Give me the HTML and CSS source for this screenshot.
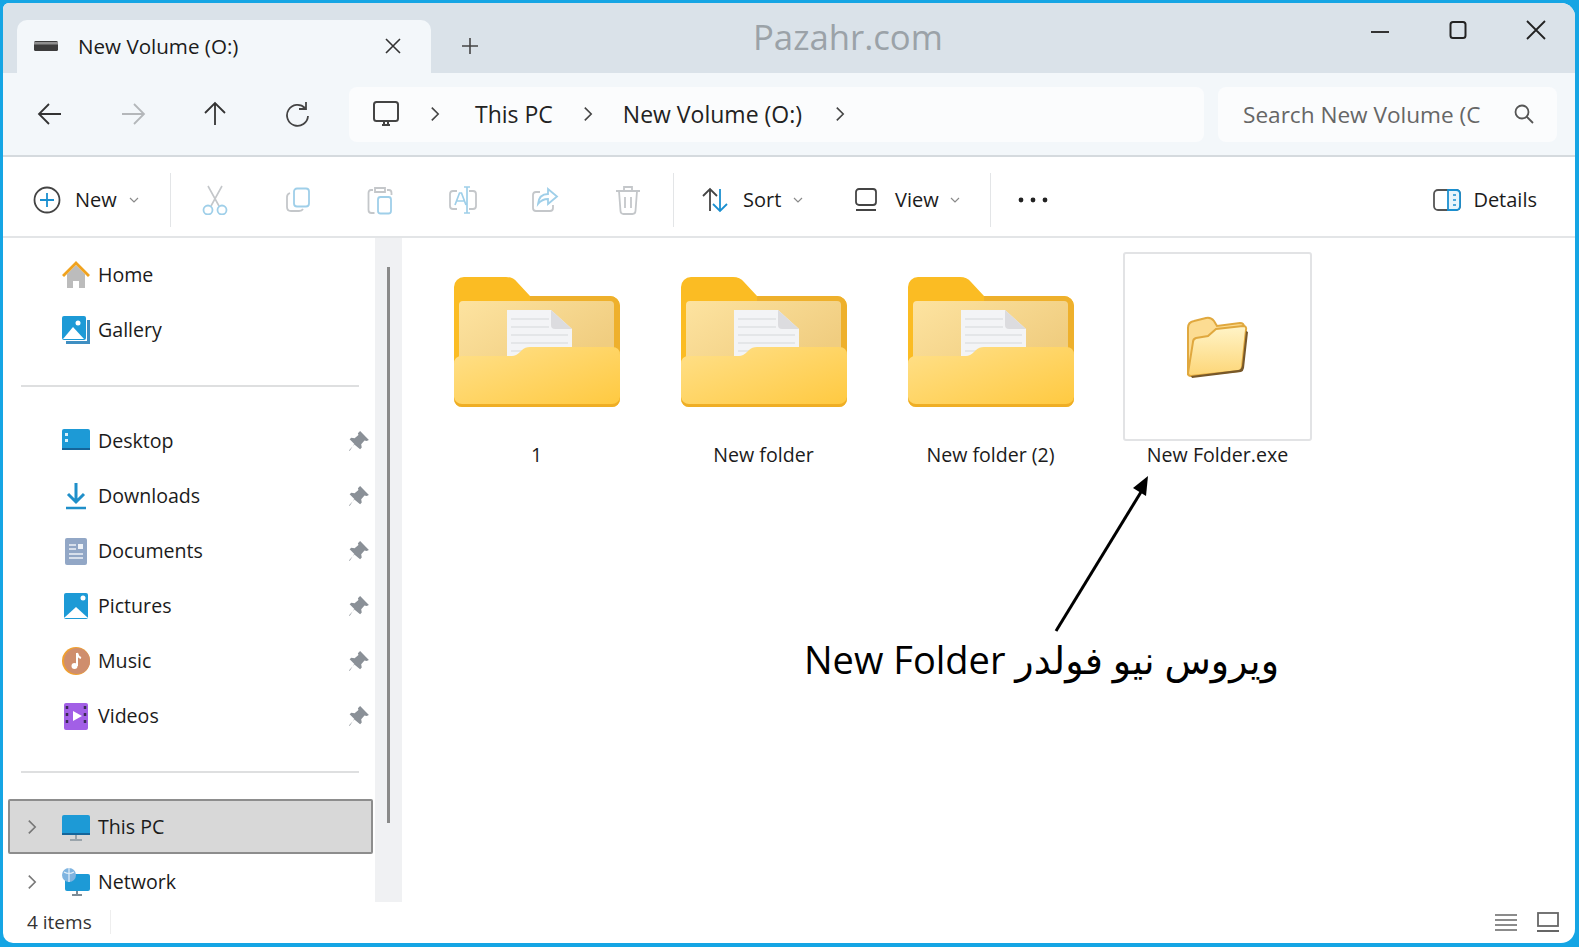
FILE: index.html
```html
<!DOCTYPE html>
<html lang="en">
<head>
    <meta charset="UTF-8">
    <meta name="viewport" content="width=device-width, initial-scale=1.0">
    <title>New Volume (O:)</title>
    <link rel="stylesheet" href="styles.css">
</head>
<body>
    <svg class="defs" width="0" height="0" aria-hidden="true">
        <defs>
            <linearGradient id="paper" x1="0" y1="0" x2="1" y2="0.6">
                <stop offset="0" stop-color="#fde3a0"/>
                <stop offset="1" stop-color="#f0cd80"/>
            </linearGradient>
            <linearGradient id="front" x1="0" y1="0" x2="1" y2="1">
                <stop offset="0" stop-color="#ffe08a"/>
                <stop offset="1" stop-color="#ffc93f"/>
            </linearGradient>
            <linearGradient id="small-front" x1="0" y1="0" x2="0" y2="1">
                <stop offset="0" stop-color="#fff4c8"/>
                <stop offset="1" stop-color="#fdd677"/>
            </linearGradient>
            <symbol id="folder" viewBox="0 0 166 130">
                <path d="M0 10a10 10 0 0 1 10-10h42q7 0 11 5l13 14h80a10 10 0 0 1 10 10v91H0z" fill="#fbbc23"/>
                <path d="M76 19h80a10 10 0 0 1 10 10v60H76z" fill="#eeb02c"/>
                <rect x="5" y="24" width="155" height="60" rx="4" fill="url(#paper)"/>
                <path d="M53 33h44l21 19v30H53z" fill="#f3f4f6"/>
                <path d="M97 33l21 19h-17q-4 0-4-4z" fill="#dcdcdf"/>
                <path d="M57 42h38M57 50h38M57 58h57M57 66h57M57 74h57" stroke="#e0e1e4" stroke-width="1.5"/>
                <path d="M8 79h50q4 0 8-4l2-2q3-3 8-3h82q8 0 8 8v44a8 8 0 0 1-8 8H8a8 8 0 0 1-8-8V87q0-8 8-8z" fill="url(#front)"/>
                <path d="M0 122a8 8 0 0 0 8 8h150a8 8 0 0 0 8-8v-2a8 8 0 0 1-8 7H8a8 8 0 0 1-8-7z" fill="#efae25"/>
            </symbol>
            <symbol id="pin" viewBox="0 0 20 20">
                <path d="M11 1l8 8-2 1-2-.5-3 3.500.5 3-1.500 1.500L5.500 13 1.500 19 1 18.500 6 13 1.500 8.500 3 7l3 .5L9.500 4.500 9 3z" fill="#8a9097"/>
            </symbol>
            <symbol id="chev" viewBox="0 0 12 20">
                <path d="M2 2l8 8-8 8" fill="none" stroke="currentColor" stroke-width="2"/>
            </symbol>
            <symbol id="caret" viewBox="0 0 10 6">
                <path d="M1 1l4 4 4-4" fill="none" stroke="#8a8a8a" stroke-width="1.200"/>
            </symbol>
        </defs>
    </svg>

    <div class="window">
        <!-- Title bar with tab -->
        <div class="title-bar">
            <div class="tab">
                <svg class="tab-icon" width="24" height="10" viewBox="0 0 24 10"><rect width="24" height="10" rx="1.500" fill="#3c3c3c"/><rect y="1" width="24" height="2.500" fill="#8f8f8f"/></svg>
                <span class="tab-title">New Volume (O:)</span>
                <svg class="tab-close" width="18" height="18" viewBox="0 0 18 18"><path d="M2 2l14 14M16 2L2 16" stroke="#333" stroke-width="1.600"/></svg>
            </div>
            <svg class="tab-add" width="18" height="18" viewBox="0 0 18 18"><path d="M9 1v16M1 9h16" stroke="#444" stroke-width="1.600"/></svg>
            <div class="window-controls">
                <svg width="20" height="20" viewBox="0 0 20 20"><path d="M1 12h18" stroke="#333" stroke-width="2"/></svg>
                <svg width="20" height="20" viewBox="0 0 20 20"><rect x="2.500" y="2" width="15" height="16" rx="2.500" fill="none" stroke="#222" stroke-width="2"/></svg>
                <svg width="20" height="20" viewBox="0 0 20 20"><path d="M1 1l18 18M19 1L1 19" stroke="#222" stroke-width="1.800"/></svg>
            </div>
            <span class="watermark">Pazahr.com</span>
        </div>

        <!-- Address row -->
        <div class="nav-bar">
            <div class="nav-buttons">
                <button class="nav-btn"><svg width="26" height="24" viewBox="0 0 26 24"><path d="M24 12H2M12 2L2 12l10 10" fill="none" stroke="#333" stroke-width="1.800"/></svg></button>
                <button class="nav-btn"><svg width="26" height="24" viewBox="0 0 26 24"><path d="M2 12h22M14 2l10 10-10 10" fill="none" stroke="#b4b7ba" stroke-width="1.800"/></svg></button>
                <button class="nav-btn"><svg width="24" height="26" viewBox="0 0 24 26"><path d="M12 24V2M2 12L12 2l10 10" fill="none" stroke="#333" stroke-width="1.800"/></svg></button>
                <button class="nav-btn"><svg width="26" height="26" viewBox="0 0 26 26"><path d="M20 7a10.500 10.500 0 1 0 3 8M21 1v7h-7" fill="none" stroke="#444" stroke-width="1.800"/></svg></button>
            </div>
            <div class="address">
                <svg width="28" height="28" viewBox="0 0 28 28"><rect x="2" y="2" width="24" height="19" rx="2.500" fill="none" stroke="#444" stroke-width="2"/><path d="M10 25h8M12 21v4M16 21v4" stroke="#444" stroke-width="2"/></svg>
                <svg class="crumb-chev" width="10" height="16"><use href="#chev"/></svg>
                <span class="crumb-first">This PC</span>
                <svg class="crumb-chev" width="10" height="16"><use href="#chev"/></svg>
                <span>New Volume (O:)</span>
                <svg class="crumb-chev crumb-last" width="10" height="16"><use href="#chev"/></svg>
            </div>
            <div class="search">
                <span class="search-text">Search New Volume (C</span>
                <svg width="22" height="22" viewBox="0 0 22 22"><circle cx="9" cy="9" r="6.500" fill="none" stroke="#555" stroke-width="1.800"/><path d="M13.500 13.500L20 20" stroke="#555" stroke-width="1.800"/></svg>
            </div>
        </div>

        <!-- Command bar -->
        <div class="tool-bar">
            <div class="tool tool-new">
                <svg width="28" height="28" viewBox="0 0 28 28"><circle cx="14" cy="14" r="12.500" fill="none" stroke="#444" stroke-width="1.800"/><path d="M14 7v14M7 14h14" stroke="#1a8fd0" stroke-width="1.800"/></svg>
                <span>New</span>
                <svg class="caret" width="10" height="6"><use href="#caret"/></svg>
            </div>
            <div class="tool-sep tool-sep-first"></div>
            <div class="tool-icon"><svg width="28" height="30" viewBox="0 0 28 30"><path d="M7 1l11 20M21 1L10 21" stroke="#c4c7ca" stroke-width="1.600"/><circle cx="7" cy="25" r="4.500" fill="none" stroke="#9fcfe9" stroke-width="1.800"/><circle cx="21" cy="25" r="4.500" fill="none" stroke="#9fcfe9" stroke-width="1.800"/></svg></div>
            <div class="tool-icon"><svg width="26" height="26" viewBox="0 0 26 26"><rect x="9" y="1.500" width="15" height="18" rx="3" fill="none" stroke="#9fcfe9" stroke-width="1.800"/><path d="M5 6Q2 7 2 10v10q0 4 4 4h8q3 0 4-2" fill="none" stroke="#c4c7ca" stroke-width="1.800"/></svg></div>
            <div class="tool-icon"><svg width="26" height="30" viewBox="0 0 26 30"><path d="M6 5H4Q1.500 5 1.500 8v17q0 3 3 3h3M20 5h2q2.500 0 2.500 3v2M8 3h10v4H8z" fill="none" stroke="#c4c7ca" stroke-width="1.800"/><rect x="11" y="12" width="13" height="16.500" rx="2.500" fill="none" stroke="#9fcfe9" stroke-width="1.800"/></svg></div>
            <div class="tool-icon"><svg width="30" height="30" viewBox="0 0 30 30"><path d="M9 6H5Q2 6 2 9v12q0 3 3 3h4M21 6h4q3 0 3 3v12q0 3-3 3h-4" fill="none" stroke="#c4c7ca" stroke-width="1.800"/><path d="M16 2h6M19 2v26M16 28h6M7 20l4.500-12h2L18 20M9 16h7" fill="none" stroke="#9fcfe9" stroke-width="1.700"/></svg></div>
            <div class="tool-icon"><svg width="28" height="28" viewBox="0 0 28 28"><path d="M9 6H5Q2 6 2 9v13q0 3 3 3h14q3 0 3-3v-3" fill="none" stroke="#c4c7ca" stroke-width="1.800"/><path d="M17 3l9 7.500-9 7.500v-5Q11 13 7 18q1-10 10-10z" fill="none" stroke="#9fcfe9" stroke-width="1.800"/></svg></div>
            <div class="tool-icon"><svg width="26" height="30" viewBox="0 0 26 30"><path d="M1 6h24M9 6V2h8v4M4 6l1.500 20q.2 3 3 3h9q2.800 0 3-3L22 6M10 12v11M16 12v11" fill="none" stroke="#c4c7ca" stroke-width="1.800"/></svg></div>
            <div class="tool-sep tool-sep-gap"></div>
            <div class="tool tool-sort">
                <svg width="28" height="26" viewBox="0 0 28 26"><path d="M9 24V2M2 9l7-7 7 7" fill="none" stroke="#444" stroke-width="1.800"/><path d="M19 2v22M12 17l7 7 7-7" fill="none" stroke="#1a8fd0" stroke-width="1.800"/></svg>
                <span>Sort</span>
                <svg class="caret" width="10" height="6"><use href="#caret"/></svg>
            </div>
            <div class="tool tool-view">
                <svg width="24" height="26" viewBox="0 0 24 26"><rect x="2" y="2" width="20" height="16" rx="3" fill="none" stroke="#444" stroke-width="1.800"/><path d="M2 23h20" stroke="#444" stroke-width="2"/></svg>
                <span>View</span>
                <svg class="caret" width="10" height="6"><use href="#caret"/></svg>
            </div>
            <div class="tool-sep"></div>
            <div class="tool-more">
                <svg width="30" height="6" viewBox="0 0 30 6"><circle cx="3" cy="3" r="2.400" fill="#222"/><circle cx="15" cy="3" r="2.400" fill="#222"/><circle cx="27" cy="3" r="2.400" fill="#222"/></svg>
            </div>
            <div class="tool tool-details">
                <svg width="28" height="22" viewBox="0 0 28 22"><rect x="1" y="1" width="26" height="20" rx="4" fill="none" stroke="#555" stroke-width="1.800"/><path d="M15 1h8q4 0 4 4v12q0 4-4 4h-8z" fill="#e8f4fb" stroke="#1a8fd0" stroke-width="1.800"/><path d="M20 6h3M20 11h3M20 16h3" stroke="#1a8fd0" stroke-width="1.600"/></svg>
                <span>Details</span>
            </div>
        </div>

        <!-- Sidebar and files -->
        <div class="main">
            <div class="sidebar">
                <div class="side-row">
                    <svg class="side-icon" viewBox="0 0 28 28"><path d="M5 13L14 4l9 9v14h-6v-7h-6v7H5z" fill="#bcbcbc"/><path d="M0 14L14 0l14 14-2 2L14 4 2 16z" fill="#f0a21e"/></svg>
                    <span>Home</span>
                </div>
                <div class="side-row">
                    <svg class="side-icon" viewBox="0 0 28 28"><path d="M25 4h3v24H4v-3h21z" fill="#3f8fc2"/><rect width="24" height="24" rx="2" fill="#1d9ad6"/><path d="M1 23l10-12 11 12z" fill="#fff"/><circle cx="16" cy="7" r="2.500" fill="#fff"/></svg>
                    <span>Gallery</span>
                </div>
                <div class="side-sep"></div>
                <div class="side-row">
                    <svg class="side-icon" viewBox="0 0 28 28"><rect y="2" width="28" height="21" rx="2" fill="#1d9ad6"/><rect y="21" width="28" height="2" fill="#15659a"/><rect x="3" y="6" width="3" height="3" fill="#d8f0fb"/><rect x="3" y="12" width="3" height="3" fill="#d8f0fb"/></svg>
                    <span>Desktop</span>
                    <svg class="pin"><use href="#pin"/></svg>
                </div>
                <div class="side-row">
                    <svg class="side-icon" viewBox="0 0 28 28"><path d="M14 1v18M6 12l8 8 8-8" fill="none" stroke="#1f8fc9" stroke-width="3"/><path d="M4 26h20" stroke="#1f8fc9" stroke-width="2.500"/></svg>
                    <span>Downloads</span>
                    <svg class="pin"><use href="#pin"/></svg>
                </div>
                <div class="side-row">
                    <svg class="side-icon" viewBox="0 0 28 28"><rect x="3" y="1" width="22" height="27" rx="2" fill="#92a7c6"/><path d="M7 8h7M7 12h7M7 17h14M7 21h14" stroke="#eef2f7" stroke-width="1.600"/><rect x="16" y="7" width="5" height="5" fill="#eef2f7"/></svg>
                    <span>Documents</span>
                    <svg class="pin"><use href="#pin"/></svg>
                </div>
                <div class="side-row">
                    <svg class="side-icon" viewBox="0 0 28 28"><rect x="2" y="1" width="24" height="26" rx="2" fill="#1d9ad6"/><path d="M2 26l12-11 12 11z" fill="#fff"/><circle cx="21" cy="6" r="2.500" fill="#fff"/></svg>
                    <span>Pictures</span>
                    <svg class="pin"><use href="#pin"/></svg>
                </div>
                <div class="side-row">
                    <svg class="side-icon" viewBox="0 0 28 28"><circle cx="14" cy="14" r="14" fill="#f0a030"/><circle cx="15" cy="14" r="13" fill="#cf8e6d"/><path d="M15 6v13" stroke="#fff" stroke-width="2"/><circle cx="12.500" cy="19" r="3" fill="#fff"/><path d="M15 6q1 4 4 5" fill="none" stroke="#fff" stroke-width="2"/></svg>
                    <span>Music</span>
                    <svg class="pin"><use href="#pin"/></svg>
                </div>
                <div class="side-row">
                    <svg class="side-icon" viewBox="0 0 28 28"><rect x="2" y="1" width="24" height="27" rx="2" fill="#a25fe6"/><path d="M11 9l9 5-9 5z" fill="#fff"/><path d="M5 4v21M23 4v21" stroke="#3a2a55" stroke-width="2.500" stroke-dasharray="3 4"/></svg>
                    <span>Videos</span>
                    <svg class="pin"><use href="#pin"/></svg>
                </div>
                <div class="side-sep"></div>
                <div class="side-row side-selected">
                    <svg class="side-chev" width="10" height="16"><use href="#chev"/></svg>
                    <svg class="side-icon" viewBox="0 0 28 28"><rect y="2" width="28" height="20" rx="2" fill="#1d9ad6"/><path d="M0 20h28v2H0z" fill="#15659a"/><path d="M14 22v4M8 27h12" stroke="#9aa4ab" stroke-width="2"/></svg>
                    <span>This PC</span>
                </div>
                <div class="side-row side-child">
                    <svg class="side-chev" width="10" height="16"><use href="#chev"/></svg>
                    <svg class="side-icon" viewBox="0 0 28 28"><rect x="3" y="6" width="25" height="17" rx="2" fill="#1d9ad6"/><path d="M15 23v4M10 27h10" stroke="#7e8c96" stroke-width="2"/><circle cx="7" cy="7" r="7" fill="#7fb4e0"/><path d="M2 4q5 3 10 0M7 0v14" stroke="#e3eff8" stroke-width="1.200" fill="none"/></svg>
                    <span>Network</span>
                </div>
            </div>
            <div class="scroll-track"><div class="scroll-thumb"></div></div>

            <div class="files">
                <div class="file">
                    <div class="thumb"><svg class="folder-big"><use href="#folder"/></svg></div>
                    <div class="file-name">1</div>
                </div>
                <div class="file">
                    <div class="thumb"><svg class="folder-big"><use href="#folder"/></svg></div>
                    <div class="file-name">New folder</div>
                </div>
                <div class="file">
                    <div class="thumb"><svg class="folder-big"><use href="#folder"/></svg></div>
                    <div class="file-name">New folder (2)</div>
                </div>
                <div class="file">
                    <div class="thumb thumb-framed">
                        <svg width="64" height="62" viewBox="0 0 64 62">
                            <path d="M2 58L2 12q0-6 6-7l12-3q5-1 8 3l3 5 23-3q4 0 4 4L56 48z" fill="#fcdc92" stroke="#e0a83e" stroke-width="2"/>
                            <path d="M7 26q0-3 3-4l12-2 8-7 27-3q4 0 3 4l-4 37q0 3-3 4L5 60q-3 0-3-3z" fill="url(#small-front)" stroke="#e0a83e" stroke-width="2"/>
                            <path d="M5 60l47-6q3 0 4-4l4-35 2 1-4 36q-.5 3-3 4L6 62z" fill="#77582a"/>
                        </svg>
                    </div>
                    <div class="file-name">New Folder.exe</div>
                </div>
            </div>

            <!-- Annotation drawn over the file area -->
            <svg class="arrow" width="110" height="170" viewBox="0 0 110 170">
                <path d="M7 165L92 26" stroke="#000" stroke-width="3"/>
                <path d="M99 10l-2 20-13-8z" fill="#000"/>
            </svg>
            <div class="annotation" dir="rtl" lang="fa">ویروس نیو فولدر New Folder</div>
        </div>

        <!-- Status bar -->
        <div class="status-bar">
            <span class="status-count">4 items</span>
            <div class="status-sep"></div>
            <div class="status-views">
                <svg width="22" height="20" viewBox="0 0 22 20"><path d="M0 3h22M0 8h22M0 13h22M0 18h22" stroke="#666" stroke-width="1.700"/></svg>
                <svg width="22" height="20" viewBox="0 0 22 20"><rect x="1" y="1" width="20" height="13" fill="none" stroke="#666" stroke-width="1.800"/><path d="M0 19h22" stroke="#666" stroke-width="2"/></svg>
            </div>
        </div>
    </div>
</body>
</html>
```

FILE: styles.css
```css
:root {
    --ui-font: "Open Sans", "Noto Sans", Arial, sans-serif;
}

html, body {
    height: 100%;
}

body {
    margin: 0;
    background-color: #15a5e4;
    font-family: var(--ui-font);
    color: #1b1b1b;
    overflow: hidden;
}

.defs {
    position: absolute;
}

svg {
    display: block;
    flex-shrink: 0;
}

.window {
    display: flex;
    flex-direction: column;
    height: calc(100vh - 7px);
    margin: 3px 4px 4px 3px;
    background-color: #ffffff;
    border-radius: 6px 14px 14px 10px;
    overflow: hidden;
}

/* Title bar */
.title-bar {
    position: relative;
    display: flex;
    align-items: flex-end;
    flex: 0 0 70px;
    padding-left: 14px;
    background-color: #dae2e9;
}

.tab {
    display: flex;
    align-items: center;
    width: 414px;
    height: 53px;
    box-sizing: border-box;
    padding: 0 29px 2px 17px;
    background-color: #f3f7fa;
    border-radius: 10px 10px 0 0;
    font-size: 20.6px;
}

.tab-icon {
    margin-right: 20px;
}

.tab-title {
    flex: 1;
}

.tab-add {
    margin: 0 0 18px 30px;
}

.window-controls {
    display: flex;
    gap: 58px;
    margin: 0 29px 33px auto;
}

.watermark {
    position: absolute;
    left: 750px;
    top: 10px;
    font-size: 34.7px;
    color: #9ba2a8;
}

/* Address row */
.nav-bar {
    display: flex;
    align-items: center;
    flex: 0 0 84px;
    padding: 0 18px 0 6px;
    gap: 14px;
    background-color: #f3f7fa;
    border-bottom: 2px solid #d5dade;
    box-sizing: border-box;
}

.nav-buttons {
    display: flex;
    margin-right: -4px;
}

.nav-btn {
    display: flex;
    align-items: center;
    justify-content: center;
    width: 82.5px;
    padding: 0;
    background: none;
    border: none;
}

.address, .search {
    display: flex;
    align-items: center;
    height: 55px;
    background-color: #fbfcfd;
    border-radius: 8px;
    font-size: 23px;
    color: #222;
}

.address {
    flex: 1;
    gap: 30px;
    padding-left: 23px;
}

.crumb-chev {
    color: #444;
}

.crumb-first {
    margin-left: 5px;
}

.crumb-last {
    margin-left: 3px;
}

.search {
    flex: 0 0 339px;
    box-sizing: border-box;
    padding: 0 22px 0 25px;
    justify-content: space-between;
    color: #666;
    font-size: 22.6px;
}

.search-text {
    white-space: nowrap;
}

/* Command bar */
.tool-bar {
    display: flex;
    align-items: center;
    flex: 0 0 81px;
    box-sizing: border-box;
    padding-top: 6px;
    border-bottom: 2px solid #e3e5e7;
    font-size: 20px;
}

.tool {
    display: flex;
    align-items: center;
    box-sizing: border-box;
}

.tool-new {
    width: 167px;
    padding-left: 30px;
    gap: 14px;
}

.tool-sort {
    width: 178px;
    padding-left: 27px;
    gap: 14px;
}

.tool-view {
    width: 138px;
    padding-left: 2px;
    gap: 17px;
}

.caret {
    margin-left: -2px;
}

.tool-view .caret {
    margin-left: -6px;
}

.tool-sep {
    width: 1px;
    height: 54px;
    background-color: #e3e5e7;
}

.tool-sep-first {
    margin-right: 3px;
}

.tool-sep-gap {
    margin-left: 4px;
}

.tool-icon {
    display: flex;
    justify-content: center;
    width: 82.5px;
}

.tool-more {
    display: flex;
    justify-content: center;
    width: 84px;
}

.tool-details {
    gap: 12px;
    margin-left: auto;
    padding-right: 38px;
}

/* Sidebar */
.main {
    position: relative;
    display: flex;
    flex: 1;
    min-height: 0;
    overflow: hidden;
}

.sidebar {
    flex: 0 0 372px;
    box-sizing: border-box;
    padding-top: 9px;
    font-size: 19.6px;
}

.side-row {
    display: flex;
    align-items: center;
    height: 55px;
    box-sizing: border-box;
    padding-left: 59px;
}

.side-icon {
    width: 28px;
    height: 28px;
    margin-right: 8px;
}

.pin {
    width: 22px;
    height: 22px;
    margin-left: auto;
    margin-right: 5px;
}

.side-sep {
    height: 2px;
    margin: 28px 16px 26px 18px;
    background-color: #dedfe0;
}

.side-selected {
    height: 55px;
    margin: 0 2px 0 5px;
    padding-left: 17px;
    background-color: #d8d8d8;
    border: 2px solid #8d8d8d;
    border-radius: 2px;
}

.side-child {
    padding-left: 24px;
}

.side-chev {
    margin-right: 25px;
    color: #777;
}

.scroll-track {
    flex: 0 0 27px;
    background-color: #f0f1f3;
}

.scroll-thumb {
    width: 3px;
    height: 556px;
    margin: 29px 0 0 12px;
    background-color: #8a8a8a;
}

/* Files */
.files {
    flex: 1;
    display: grid;
    grid-template-columns: repeat(4, 227px);
    align-content: start;
    padding: 14px 0 0 21px;
}

.file {
    display: flex;
    flex-direction: column;
    align-items: center;
}

.thumb {
    display: flex;
    align-items: center;
    justify-content: center;
    width: 189px;
    height: 189px;
    box-sizing: border-box;
    border: 2px solid transparent;
    border-radius: 3px;
}

.thumb-framed {
    border-color: #e2e3e5;
}

.folder-big {
    width: 166px;
    height: 130px;
    margin-bottom: 9px;
}

.file-name {
    margin-top: 1px;
    font-size: 19.6px;
    line-height: 26px;
}

.arrow {
    position: absolute;
    left: 1046px;
    top: 228px;
}

.annotation {
    position: absolute;
    left: 801px;
    top: 396px;
    font-family: "Open Sans", "DejaVu Sans", sans-serif;
    font-size: 38px;
    line-height: 50px;
    color: #000;
    white-space: nowrap;
}

/* Status bar */
.status-bar {
    display: flex;
    align-items: center;
    flex: 0 0 41px;
    box-sizing: border-box;
    padding: 0 16px 2px 24px;
    font-size: 19px;
    color: #333;
}

.status-sep {
    width: 1px;
    height: 24px;
    margin-left: 18px;
    background-color: #eeeeee;
}

.status-views {
    display: flex;
    gap: 20px;
    margin-left: auto;
}
```
